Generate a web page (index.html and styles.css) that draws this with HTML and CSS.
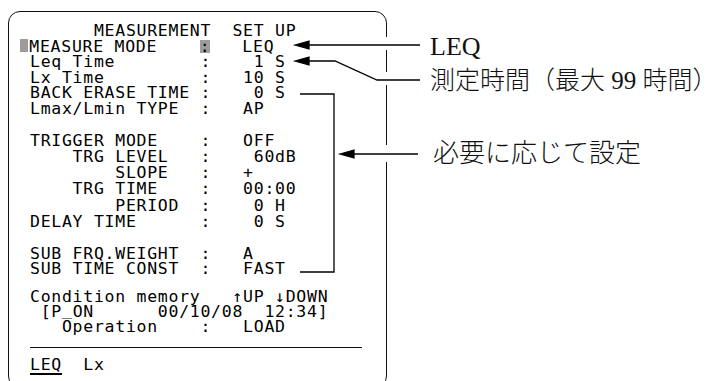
FILE: index.html
```html
<!DOCTYPE html>
<html lang="ja">
<head>
	<meta charset="UTF-8">
	<title>MEASUREMENT SET UP</title>
	<link rel="stylesheet" href="styles.css">
</head>
<body>
<div class="figure">
	<div class="screen">
		<div class="rows rows-a">
			<div class="row">      MEASUREMENT  SET UP</div>
			<div class="row"><span class="cursor"></span>MEASURE MODE    <span class="sel">:</span>   LEQ</div>
			<div class="row">Leq Time        :    1 S</div>
			<div class="row">Lx Time         :   10 S</div>
			<div class="row">BACK ERASE TIME :    0 S</div>
			<div class="row">Lmax/Lmin TYPE  :   AP</div>
		</div>
		<div class="rows rows-b">
			<div class="row">TRIGGER MODE    :   OFF</div>
			<div class="row">    TRG LEVEL   :    60dB</div>
			<div class="row">        SLOPE   :   +</div>
			<div class="row">    TRG TIME    :   00:00</div>
			<div class="row">        PERIOD  :    0 H</div>
			<div class="row">DELAY TIME      :    0 S</div>
		</div>
		<div class="rows rows-c">
			<div class="row">SUB FRQ.WEIGHT  :   A</div>
			<div class="row">SUB TIME CONST  :   FAST</div>
		</div>
		<div class="rows rows-d">
			<div class="row">Condition memory   ↑UP ↓DOWN</div>
			<div class="row"> [P<span class="under">_</span>ON      00/10/08  12:34]</div>
			<div class="row">   Operation    :   LOAD</div>
		</div>
		<div class="divider"></div>
		<div class="rows rows-e">
			<div class="row"><span class="current">LEQ</span>  Lx</div>
		</div>
	</div>
	<div class="notes">
		<div class="note note-leq">LEQ</div>
		<div class="note note-time">測定時間（最大 99 時間）</div>
		<div class="note note-opt">必要に応じて設定</div>
	</div>
	<svg class="leaders" width="720" height="381" viewBox="0 0 720 381">
		<rect x="383" y="37" width="8" height="13" fill="#fff"/>
		<rect x="383" y="72" width="8" height="13" fill="#fff"/>
		<rect x="383" y="145" width="8" height="17" fill="#fff"/>

		<line x1="306" y1="45" x2="420" y2="45"/>
		<polygon points="295,45 309,41 309,49"/>

		<polyline points="306,61 335,61 377,80 420,80"/>
		<polygon points="295,61 309,57 309,65"/>

		<polyline points="300,94 334,94 334,272 300,272"/>

		<line x1="351" y1="154" x2="418" y2="154"/>
		<polygon points="340,154 354,150 354,158"/>
	</svg>
</div>
</body>
</html>
```

FILE: styles.css
```css
html, body {
	margin: 0;
	overflow: hidden;
	background: #fff;
}
.figure {
	position: relative;
	display: flex;
	align-items: flex-start;
	padding: 11px 0 0 8px;
	width: 720px;
	height: 381px;
	box-sizing: border-box;
}
.screen {
	flex: none;
	box-sizing: border-box;
	width: 379px;
	height: 377px;
	padding: 11px 0 0 21px;
	border: 1.5px solid #111;
	border-radius: 12px;
	font-family: "DejaVu Sans Mono", "Liberation Mono", monospace;
	font-size: 16.5px;
	letter-spacing: 0.72px;
	color: #000;
}
.row {
	white-space: pre;
}
.rows-a {
	line-height: 15.5px;
}
.rows-b {
	margin-top: 16.5px;
	line-height: 16.3px;
}
.rows-c {
	margin-top: 15.7px;
	line-height: 15px;
}
.rows-d {
	margin-top: 13.5px;
	line-height: 15px;
}
.rows-e {
	margin-top: 9px;
	line-height: 15px;
}
.under {
	line-height: 0;
	vertical-align: 2px;
}
.cursor {
	display: inline-block;
	width: 8px;
	height: 13px;
	margin-left: -10.5px;
	margin-right: 1.78px;
	vertical-align: -0.5px;
	background: #9c9c9c;
}
.sel {
	background: linear-gradient(#9c9c9c, #9c9c9c) 0 50% / 100% 13px no-repeat;
}
.divider {
	width: 332px;
	margin-top: 13px;
	border-top: 1.5px solid #111;
}
.current {
	text-decoration: underline;
	text-decoration-thickness: 1.5px;
	text-underline-offset: 3px;
}

.notes {
	margin-left: 43px;
	padding-top: 20.5px;
	font-family: "Liberation Serif", "Noto Sans CJK JP", serif;
	font-weight: 300;
	color: #111;
	white-space: nowrap;
}
.note {
	line-height: 30px;
}
.note-leq {
	font-size: 26px;
	font-weight: 400;
}
.note-time {
	margin-top: 4.5px;
	font-size: 25px;
}
.note-opt {
	margin-top: 43px;
	font-size: 26px;
	padding-left: 3px;
}

.leaders {
	position: absolute;
	left: 0;
	top: 0;
	pointer-events: none;
	fill: #000;
	stroke: #000;
	stroke-width: 1.3;
}
.leaders polyline {
	fill: none;
}
.leaders rect {
	stroke: none;
}
```
